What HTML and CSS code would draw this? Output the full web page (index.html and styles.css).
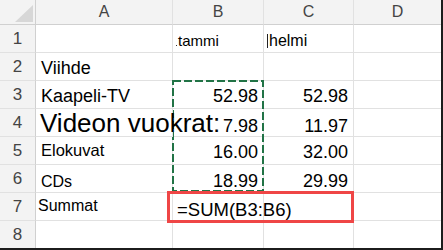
FILE: index.html
```html
<!DOCTYPE html>
<html>
<head>
<meta charset="utf-8">
<link rel="stylesheet" href="styles.css">
</head>
<body>
<div class="sheet">
  <div class="grid">
    <div class="hd corner"><span class="tri"></span></div>
    <div class="hd">A</div>
    <div class="hd">B</div>
    <div class="hd">C</div>
    <div class="hd last">D</div>

    <div class="rh">1</div>
    <div class="c r1"></div>
    <div class="c r1 small"><span class="dot"></span>tammi</div>
    <div class="c r1 helmi"><span class="bar"></span>helmi</div>
    <div class="c r1 last"></div>

    <div class="rh">2</div>
    <div class="c r2">Viihde</div>
    <div class="c r2"></div>
    <div class="c r2"></div>
    <div class="c r2 last"></div>

    <div class="rh">3</div>
    <div class="c r3">Kaapeli-TV</div>
    <div class="c r3 num">52.98</div>
    <div class="c r3 num">52.98</div>
    <div class="c r3 last"></div>

    <div class="rh">4</div>
    <div class="c r4 big">Videon vuokrat:</div>
    <div class="c r4 num">7.98</div>
    <div class="c r4 num">11.97</div>
    <div class="c r4 last"></div>

    <div class="rh">5</div>
    <div class="c r5 mid">Elokuvat</div>
    <div class="c r5 num">16.00</div>
    <div class="c r5 num">32.00</div>
    <div class="c r5 last"></div>

    <div class="rh">6</div>
    <div class="c r6 cds">CDs</div>
    <div class="c r6 num">18.99</div>
    <div class="c r6 num">29.99</div>
    <div class="c r6 last"></div>

    <div class="rh">7</div>
    <div class="c r7 summat">Summat</div>
    <div class="c r7 formula">=SUM(B3:B6)</div>
    <div class="c r7"></div>
    <div class="c r7 last"></div>

    <div class="rh lastrow">8</div>
    <div class="c lastrow"></div>
    <div class="c lastrow"></div>
    <div class="c lastrow"></div>
    <div class="c lastrow last"></div>
  </div>
  <svg class="ants" width="92" height="112" viewBox="0 0 92 112">
    <rect x="1" y="1" width="90" height="110" fill="none" stroke="#217346" stroke-width="2" stroke-dasharray="8 3"/>
  </svg>
  <div class="formula-box"></div>
</div>
</body>
</html>
```

FILE: styles.css
```css
html, body {
  margin: 0;
  padding: 0;
  background: #ffffff;
}

.sheet {
  position: relative;
  width: 443px;
  height: 250px;
  box-sizing: border-box;
  border-right: 2px solid #1c1c1c;
  border-bottom: 2px solid #1c1c1c;
  background: #ffffff;
  overflow: hidden;
  font-family: "Liberation Sans", Arial, sans-serif;
  color: #000;
}

.grid {
  display: grid;
  grid-template-columns: 36px 137px 91px 90px 87px;
  grid-template-rows: 25px repeat(7, 28px) 27px;
}

.grid > div {
  box-sizing: border-box;
  border-right: 1px solid #e1e1e1;
  border-bottom: 1px solid #e1e1e1;
  white-space: nowrap;
  overflow: visible;
  min-width: 0;
}

.grid > .last {
  border-right: none;
}

.grid > .lastrow {
  border-bottom: none;
}

.hd {
  background: #f3f3f3;
  color: #444;
  font-size: 16px;
  display: flex;
  align-items: center;
  justify-content: center;
  border-bottom-color: #d0d0d0 !important;
}

.corner {
  position: relative;
  border-right-color: #d0d0d0 !important;
}

.tri {
  position: absolute;
  left: 15px;
  top: 5px;
  width: 18px;
  height: 17px;
  background: #d7d7d7;
  clip-path: polygon(100% 0, 100% 100%, 0 100%);
}

.rh {
  background: #f3f3f3;
  color: #444;
  font-size: 17px;
  display: flex;
  align-items: center;
  justify-content: center;
  border-right-color: #d0d0d0 !important;
}

.c {
  display: flex;
  align-items: flex-end;
  font-size: 18px;
  line-height: 20px;
  padding: 0 4px 2px 5px;
}

.num {
  justify-content: flex-end;
  padding-right: 5px;
}

.r1 {
  font-size: 15px;
  padding-bottom: 1px;
}

.small {
  padding-left: 3px;
}

.dot {
  display: inline-block;
  width: 1px;
  height: 1px;
  background: #333;
  margin-right: 1px;
  margin-bottom: 5px;
  align-self: flex-end;
}

.helmi {
  font-size: 16px;
  padding-left: 3px;
}

.bar {
  display: inline-block;
  width: 1px;
  height: 14px;
  background: #222;
  margin-right: 1px;
  margin-bottom: 3px;
}

.r4 {
  padding-bottom: 0;
}

.big {
  font-size: 26px;
  line-height: 26px;
  padding-left: 4px;
  position: relative;
  z-index: 1;
}

.mid {
  font-size: 16.5px;
  padding-bottom: 4px;
}

.r6 {
  padding-bottom: 1px;
}

.cds {
  font-size: 16px;
  padding-bottom: 0;
}

.summat {
  font-size: 16px;
  padding-left: 2px;
  padding-bottom: 4px;
}

.formula {
  padding-left: 4px;
  padding-bottom: 0;
  font-size: 18.5px;
}

.ants {
  position: absolute;
  left: 172px;
  top: 80px;
}

.formula-box {
  position: absolute;
  left: 167px;
  top: 191px;
  width: 187px;
  height: 32px;
  box-sizing: border-box;
  border: 3px solid #ef4646;
}
```
